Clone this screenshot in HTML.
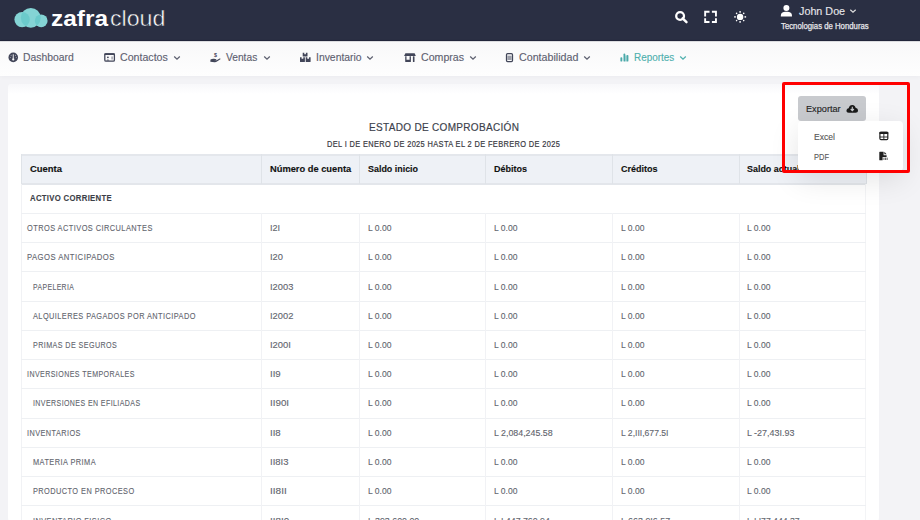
<!DOCTYPE html>
<html><head><meta charset="utf-8"><style>
html,body{margin:0;padding:0;}
body{width:920px;height:520px;overflow:hidden;position:relative;background:#f3f3f6;font-family:"Liberation Sans",sans-serif;}
.t{position:absolute;white-space:nowrap;line-height:1;transform-origin:0 0;-webkit-text-stroke:0.12px currentColor;}
svg{overflow:visible}
</style></head><body>
<div style="position:absolute;left:0;top:0;width:920px;height:41px;background:#2a2f43;box-shadow:inset 0 -1px 0 #22263a"></div>
<svg style="position:absolute;left:0;top:0" width="60" height="40" viewBox="0 0 60 40">
<defs><clipPath id="cm"><circle cx="30.8" cy="17.8" r="9.9"/></clipPath></defs>
<g fill="#84d4d5">
<circle cx="22.1" cy="19.6" r="7.7"/>
<circle cx="30.8" cy="17.8" r="9.9"/>
<circle cx="41.2" cy="20.8" r="6.4"/>
</g>
<g fill="#6bcacb" clip-path="url(#cm)">
<circle cx="22.1" cy="19.6" r="7.7"/>
<circle cx="41.2" cy="20.8" r="6.4"/>
</g></svg>
<div class="t" style="left:50.80px;top:8px;font-size:22.08px;font-weight:bold;color:#fff;transform:scaleX(1.1050);-webkit-text-stroke:0;">zafra</div>
<div class="t" style="left:110.20px;top:7px;font-size:22.67px;font-weight:normal;color:#fff;transform:scaleX(1.0223);-webkit-text-stroke:0.5px #2a2f43;">cloud</div>
<svg style="position:absolute;left:670px;top:6px" width="90" height="24" viewBox="670 6 90 24">
<circle cx="680.1" cy="16" r="3.9" fill="none" stroke="#fff" stroke-width="2.3"/>
<line x1="682.6" y1="18.3" x2="686.5" y2="22.2" stroke="#fff" stroke-width="2.4" stroke-linecap="round"/>
<path d="M705.15 16.4 V11.75 H709.5 M711.9 11.75 H715.95 V16.4 M715.95 18.3 V22.05 H711.9 M709.5 22.05 H705.15 V18.3" fill="none" stroke="#fff" stroke-width="1.9"/>
<circle cx="740.1" cy="16.9" r="3.2" fill="#fff"/>
<g fill="#fff"><rect x="739.35" y="11.1" width="1.5" height="1.6"/><rect x="739.35" y="21.1" width="1.5" height="1.6"/><rect x="734.2" y="16.15" width="1.6" height="1.5"/><rect x="744.5" y="16.15" width="1.6" height="1.5"/>
<circle cx="736.6" cy="13.4" r="0.8"/><circle cx="743.7" cy="13.4" r="0.8"/><circle cx="736.6" cy="20.6" r="0.8"/><circle cx="743.7" cy="20.6" r="0.8"/></g>
</svg>
<svg style="position:absolute;left:778px;top:2px" width="18" height="18" viewBox="778 2 18 18">
<circle cx="786.4" cy="8" r="3" fill="#fff"/>
<path d="M780.8 16.5 C780.8 12.6 782.5 11.8 786.4 11.8 C790.3 11.8 792 12.6 792 16.5 Z" fill="#fff"/>
</svg>
<div class="t" style="left:799.30px;top:6px;font-size:11.05px;font-weight:normal;color:#e6e6ea;transform:scaleX(0.9751);">John Doe</div>
<svg style="position:absolute;left:848px;top:8px" width="10" height="6" viewBox="0 0 10 6"><path d="M2.3 1.8 L5 4.3 L7.7 1.8" fill="none" stroke="#ddd" stroke-width="1.2"/></svg>
<div class="t" style="left:781.40px;top:23px;font-size:8.28px;font-weight:normal;color:#e6e6ea;transform:scaleX(0.9402);-webkit-text-stroke:0.25px #e6e6ea;">Tecnologias de Honduras</div>
<div style="position:absolute;left:0;top:41px;width:920px;height:34.5px;background:linear-gradient(#f8f8f9,#fefefe);box-shadow:0 1px 5px rgba(30,30,60,0.035)"></div>
<div style="position:absolute;left:0;top:41px;width:920px;height:1px;background:rgba(20,22,40,0.12)"></div>
<div class="t" style="left:23.20px;top:53px;font-size:10.03px;font-weight:normal;color:#5d6070;transform:scaleX(1.0358);">Dashboard</div>
<div class="t" style="left:120.20px;top:53px;font-size:10.03px;font-weight:normal;color:#5d6070;transform:scaleX(1.0602);">Contactos</div>
<svg style="position:absolute;left:173.2px;top:55px" width="8" height="6" viewBox="0 0 8 6"><path d="M1.2 1.6 L4 4.2 L6.8 1.6" fill="none" stroke="#5d6070" stroke-width="1.3"/></svg>
<div class="t" style="left:226.20px;top:53px;font-size:10.03px;font-weight:normal;color:#5d6070;transform:scaleX(1.0199);">Ventas</div>
<svg style="position:absolute;left:263.0px;top:55px" width="8" height="6" viewBox="0 0 8 6"><path d="M1.2 1.6 L4 4.2 L6.8 1.6" fill="none" stroke="#5d6070" stroke-width="1.3"/></svg>
<div class="t" style="left:316.00px;top:53px;font-size:10.03px;font-weight:normal;color:#5d6070;transform:scaleX(1.0380);">Inventario</div>
<svg style="position:absolute;left:366.0px;top:55px" width="8" height="6" viewBox="0 0 8 6"><path d="M1.2 1.6 L4 4.2 L6.8 1.6" fill="none" stroke="#5d6070" stroke-width="1.3"/></svg>
<div class="t" style="left:420.90px;top:53px;font-size:10.03px;font-weight:normal;color:#5d6070;transform:scaleX(1.0598);">Compras</div>
<svg style="position:absolute;left:468.9px;top:55px" width="8" height="6" viewBox="0 0 8 6"><path d="M1.2 1.6 L4 4.2 L6.8 1.6" fill="none" stroke="#5d6070" stroke-width="1.3"/></svg>
<div class="t" style="left:518.50px;top:53px;font-size:10.03px;font-weight:normal;color:#5d6070;transform:scaleX(1.0670);">Contabilidad</div>
<svg style="position:absolute;left:583.2px;top:55px" width="8" height="6" viewBox="0 0 8 6"><path d="M1.2 1.6 L4 4.2 L6.8 1.6" fill="none" stroke="#5d6070" stroke-width="1.3"/></svg>
<div class="t" style="left:634.00px;top:53px;font-size:10.03px;font-weight:normal;color:#4fb0ae;transform:scaleX(0.9897);">Reportes</div>
<svg style="position:absolute;left:679.3px;top:55px" width="8" height="6" viewBox="0 0 8 6"><path d="M1.2 1.6 L4 4.2 L6.8 1.6" fill="none" stroke="#4fb0ae" stroke-width="1.3"/></svg>
<svg style="position:absolute;left:0;top:40px" width="700" height="35" viewBox="0 40 700 35">
<circle cx="13.25" cy="57.4" r="4.8" fill="#424659"/>
<path d="M13.25 54.3 V58.8" stroke="#fdfdfd" stroke-width="0.9"/>
<circle cx="13.25" cy="59.4" r="1.1" fill="#fdfdfd"/>
<g fill="#fdfdfd"><circle cx="11.1" cy="55.3" r="0.45"/><circle cx="15.4" cy="55.3" r="0.45"/><circle cx="10.3" cy="57.6" r="0.45"/><circle cx="16.2" cy="57.6" r="0.45"/></g>
<rect x="104.8" y="53.9" width="9.6" height="7.2" rx="1.2" fill="none" stroke="#424659" stroke-width="1.3"/>
<rect x="104.3" y="53.3" width="10.6" height="1.8" rx="0.6" fill="#424659"/>
<circle cx="107.9" cy="57.3" r="0.9" fill="#424659"/>
<path d="M106.3 60.6 Q107.9 58.3 109.5 60.6 Z" fill="#424659"/>
<rect x="111.3" y="56.5" width="1.6" height="3" fill="#424659" fill-opacity="0.45"/>
<path d="M210.3 61.8 L210.5 59.6 Q212 58.5 214 58.7 L216.3 59.2 Q216.8 59.8 216 60 L213.8 59.9 L216.6 60.2 L219.6 58.6 Q220.8 58.3 220.4 59.2 L217 61.6 Q216 62.3 214.5 62.2 Z" fill="#424659"/>
<text x="214" y="56.8" font-size="5.4" font-family="Liberation Sans" font-weight="bold" fill="#424659">$</text>
<path d="M300 57.3 H301.6 V58.8 H303.3 V57.3 H304.9 V61.4 Q304.9 62 304.3 62 H300.6 Q300 62 300 61.4 Z" fill="#424659"/>
<path d="M305.7 57.3 H307.3 V58.8 H309 V57.3 H310.6 V61.4 Q310.6 62 310 62 H306.3 Q305.7 62 305.7 61.4 Z" fill="#424659"/>
<path d="M302.7 52.8 H304.3 V54.3 H305.9 V52.8 H307.5 V56 Q307.5 56.6 306.9 56.6 H303.3 Q302.7 56.6 302.7 56 Z" fill="#424659"/>
<path d="M405.4 53.2 H414.6 L415.8 56.1 H404.1 Z" fill="#424659"/>
<path d="M405.2 56.3 H410.9 V61.4 Q410.9 62 410.3 62 H405.8 Q405.2 62 405.2 61.4 Z M406.5 56.3 V59.8 H409.6 V56.3 Z" fill="#424659" fill-rule="evenodd"/>
<rect x="412.9" y="56.2" width="1.6" height="5.8" rx="0.5" fill="#424659"/>
<rect x="506.5" y="53.6" width="6" height="8" rx="1.1" fill="none" stroke="#424659" stroke-width="1.25"/>
<rect x="507.4" y="55.7" width="4.2" height="4.3" fill="#424659" fill-opacity="0.5"/>
<g fill="#4aa9a9"><rect x="620.4" y="57.2" width="1.9" height="4.4" rx="0.9"/><rect x="623.5" y="53.5" width="1.8" height="8.1" rx="0.9"/><rect x="626.5" y="54.9" width="1.9" height="6.7" rx="0.9"/>
<rect x="625.2" y="55.5" width="1.4" height="6" fill-opacity="0.45"/></g>
</svg>
<div style="position:absolute;left:8px;top:83.5px;width:871px;height:437px;background:linear-gradient(#f8f8fa,#fff 10px);border-radius:3px"></div>
<div class="t" style="left:368.60px;top:122px;font-size:11.34px;font-weight:normal;color:#3c3f4c;transform:scaleX(0.8853);-webkit-text-stroke:0.18px #3c3f4c;letter-spacing:0.03em;">ESTADO DE COMPROBACIÓN</div>
<div class="t" style="left:327.00px;top:139px;font-size:9.45px;font-weight:normal;color:#3a3a3f;transform:scaleX(0.7854);-webkit-text-stroke:0.22px #3a3a3f;letter-spacing:0.05em;">DEL I DE ENERO DE 2025 HASTA EL 2 DE FEBRERO DE 2025</div>
<div style="position:absolute;left:21px;top:154px;width:845px;height:30px;background:#eef1f6;"></div>
<div style="position:absolute;left:21px;top:154px;width:845px;height:2px;background:#e4e7ec"></div>
<div style="position:absolute;left:21px;top:183px;width:845px;height:2px;background:#e3e6eb"></div>
<div style="position:absolute;left:20.5px;top:154px;width:1px;height:30px;background:#dfe3e8"></div>
<div style="position:absolute;left:261.0px;top:154px;width:1px;height:30px;background:#dfe3e8"></div>
<div style="position:absolute;left:359.0px;top:154px;width:1px;height:30px;background:#dfe3e8"></div>
<div style="position:absolute;left:485.0px;top:154px;width:1px;height:30px;background:#dfe3e8"></div>
<div style="position:absolute;left:612.0px;top:154px;width:1px;height:30px;background:#dfe3e8"></div>
<div style="position:absolute;left:738.5px;top:154px;width:1px;height:30px;background:#dfe3e8"></div>
<div style="position:absolute;left:865.5px;top:154px;width:1px;height:30px;background:#dfe3e8"></div>
<div class="t" style="left:30.20px;top:165px;font-size:9.16px;font-weight:bold;color:#111;transform:scaleX(1.0310);">Cuenta</div>
<div class="t" style="left:269.80px;top:165px;font-size:9.16px;font-weight:bold;color:#111;transform:scaleX(1.0164);">Número de cuenta</div>
<div class="t" style="left:367.70px;top:165px;font-size:9.16px;font-weight:bold;color:#111;transform:scaleX(0.9733);">Saldo inicio</div>
<div class="t" style="left:494.10px;top:165px;font-size:9.16px;font-weight:bold;color:#111;transform:scaleX(0.9803);">Débitos</div>
<div class="t" style="left:620.80px;top:165px;font-size:9.16px;font-weight:bold;color:#111;transform:scaleX(0.9857);">Créditos</div>
<div class="t" style="left:747.40px;top:165px;font-size:9.16px;font-weight:bold;color:#111;transform:scaleX(0.9753);">Saldo actual</div>
<div style="position:absolute;left:21px;top:184px;width:1px;height:336px;background:#f1f2f5"></div>
<div style="position:absolute;left:865px;top:184px;width:1px;height:336px;background:#f3f4f6"></div>
<div class="t" style="left:30.20px;top:193px;font-size:9.45px;font-weight:bold;color:#3d3f48;transform:scaleX(0.8211);letter-spacing:0.04em;">ACTIVO CORRIENTE</div>
<div style="position:absolute;left:21px;top:212.75px;width:845px;height:1px;background:#eef0f3"></div>
<div style="position:absolute;left:21px;top:242.00px;width:845px;height:1px;background:#eef0f3"></div>
<div style="position:absolute;left:21px;top:271.25px;width:845px;height:1px;background:#eef0f3"></div>
<div style="position:absolute;left:21px;top:300.50px;width:845px;height:1px;background:#eef0f3"></div>
<div style="position:absolute;left:21px;top:329.75px;width:845px;height:1px;background:#eef0f3"></div>
<div style="position:absolute;left:21px;top:359.00px;width:845px;height:1px;background:#eef0f3"></div>
<div style="position:absolute;left:21px;top:388.25px;width:845px;height:1px;background:#eef0f3"></div>
<div style="position:absolute;left:21px;top:417.50px;width:845px;height:1px;background:#eef0f3"></div>
<div style="position:absolute;left:21px;top:446.75px;width:845px;height:1px;background:#eef0f3"></div>
<div style="position:absolute;left:21px;top:476.00px;width:845px;height:1px;background:#eef0f3"></div>
<div style="position:absolute;left:21px;top:505.25px;width:845px;height:1px;background:#eef0f3"></div>
<div style="position:absolute;left:21px;top:534.50px;width:845px;height:1px;background:#eef0f3"></div>
<div style="position:absolute;left:261.0px;top:213.25px;width:1px;height:29.25px;background:#f1f2f5"></div>
<div style="position:absolute;left:359.0px;top:213.25px;width:1px;height:29.25px;background:#f1f2f5"></div>
<div style="position:absolute;left:485.0px;top:213.25px;width:1px;height:29.25px;background:#f1f2f5"></div>
<div style="position:absolute;left:612.0px;top:213.25px;width:1px;height:29.25px;background:#f1f2f5"></div>
<div style="position:absolute;left:738.5px;top:213.25px;width:1px;height:29.25px;background:#f1f2f5"></div>
<div class="t" style="left:26.50px;top:223px;font-size:9.45px;font-weight:normal;color:#62656e;transform:scaleX(0.7839);letter-spacing:0.06em;">OTROS ACTIVOS CIRCULANTES</div>
<div class="t" style="left:269.80px;top:223px;font-size:9.45px;font-weight:normal;color:#62656e;transform:scaleX(0.9631);">I2I</div>
<div class="t" style="left:367.70px;top:223px;font-size:9.45px;font-weight:normal;color:#62656e;transform:scaleX(0.9062);">L 0.00</div>
<div class="t" style="left:494.10px;top:223px;font-size:9.45px;font-weight:normal;color:#62656e;transform:scaleX(0.9062);">L 0.00</div>
<div class="t" style="left:620.80px;top:223px;font-size:9.45px;font-weight:normal;color:#62656e;transform:scaleX(0.9062);">L 0.00</div>
<div class="t" style="left:747.40px;top:223px;font-size:9.45px;font-weight:normal;color:#62656e;transform:scaleX(0.9062);">L 0.00</div>
<div style="position:absolute;left:261.0px;top:242.50px;width:1px;height:29.25px;background:#f1f2f5"></div>
<div style="position:absolute;left:359.0px;top:242.50px;width:1px;height:29.25px;background:#f1f2f5"></div>
<div style="position:absolute;left:485.0px;top:242.50px;width:1px;height:29.25px;background:#f1f2f5"></div>
<div style="position:absolute;left:612.0px;top:242.50px;width:1px;height:29.25px;background:#f1f2f5"></div>
<div style="position:absolute;left:738.5px;top:242.50px;width:1px;height:29.25px;background:#f1f2f5"></div>
<div class="t" style="left:26.50px;top:252px;font-size:9.45px;font-weight:normal;color:#62656e;transform:scaleX(0.8146);letter-spacing:0.06em;">PAGOS ANTICIPADOS</div>
<div class="t" style="left:269.80px;top:252px;font-size:9.45px;font-weight:normal;color:#62656e;transform:scaleX(0.9899);">I20</div>
<div class="t" style="left:367.70px;top:252px;font-size:9.45px;font-weight:normal;color:#62656e;transform:scaleX(0.9062);">L 0.00</div>
<div class="t" style="left:494.10px;top:252px;font-size:9.45px;font-weight:normal;color:#62656e;transform:scaleX(0.9062);">L 0.00</div>
<div class="t" style="left:620.80px;top:252px;font-size:9.45px;font-weight:normal;color:#62656e;transform:scaleX(0.9062);">L 0.00</div>
<div class="t" style="left:747.40px;top:252px;font-size:9.45px;font-weight:normal;color:#62656e;transform:scaleX(0.9062);">L 0.00</div>
<div style="position:absolute;left:261.0px;top:271.75px;width:1px;height:29.25px;background:#f1f2f5"></div>
<div style="position:absolute;left:359.0px;top:271.75px;width:1px;height:29.25px;background:#f1f2f5"></div>
<div style="position:absolute;left:485.0px;top:271.75px;width:1px;height:29.25px;background:#f1f2f5"></div>
<div style="position:absolute;left:612.0px;top:271.75px;width:1px;height:29.25px;background:#f1f2f5"></div>
<div style="position:absolute;left:738.5px;top:271.75px;width:1px;height:29.25px;background:#f1f2f5"></div>
<div class="t" style="left:32.80px;top:282px;font-size:9.45px;font-weight:normal;color:#62656e;transform:scaleX(0.7258);letter-spacing:0.06em;">PAPELERIA</div>
<div class="t" style="left:269.80px;top:282px;font-size:9.45px;font-weight:normal;color:#62656e;transform:scaleX(0.9887);">I2003</div>
<div class="t" style="left:367.70px;top:282px;font-size:9.45px;font-weight:normal;color:#62656e;transform:scaleX(0.9062);">L 0.00</div>
<div class="t" style="left:494.10px;top:282px;font-size:9.45px;font-weight:normal;color:#62656e;transform:scaleX(0.9062);">L 0.00</div>
<div class="t" style="left:620.80px;top:282px;font-size:9.45px;font-weight:normal;color:#62656e;transform:scaleX(0.9062);">L 0.00</div>
<div class="t" style="left:747.40px;top:282px;font-size:9.45px;font-weight:normal;color:#62656e;transform:scaleX(0.9062);">L 0.00</div>
<div style="position:absolute;left:261.0px;top:301.00px;width:1px;height:29.25px;background:#f1f2f5"></div>
<div style="position:absolute;left:359.0px;top:301.00px;width:1px;height:29.25px;background:#f1f2f5"></div>
<div style="position:absolute;left:485.0px;top:301.00px;width:1px;height:29.25px;background:#f1f2f5"></div>
<div style="position:absolute;left:612.0px;top:301.00px;width:1px;height:29.25px;background:#f1f2f5"></div>
<div style="position:absolute;left:738.5px;top:301.00px;width:1px;height:29.25px;background:#f1f2f5"></div>
<div class="t" style="left:32.80px;top:311px;font-size:9.45px;font-weight:normal;color:#62656e;transform:scaleX(0.7803);letter-spacing:0.06em;">ALQUILERES PAGADOS POR ANTICIPADO</div>
<div class="t" style="left:269.80px;top:311px;font-size:9.45px;font-weight:normal;color:#62656e;transform:scaleX(0.9887);">I2002</div>
<div class="t" style="left:367.70px;top:311px;font-size:9.45px;font-weight:normal;color:#62656e;transform:scaleX(0.9062);">L 0.00</div>
<div class="t" style="left:494.10px;top:311px;font-size:9.45px;font-weight:normal;color:#62656e;transform:scaleX(0.9062);">L 0.00</div>
<div class="t" style="left:620.80px;top:311px;font-size:9.45px;font-weight:normal;color:#62656e;transform:scaleX(0.9062);">L 0.00</div>
<div class="t" style="left:747.40px;top:311px;font-size:9.45px;font-weight:normal;color:#62656e;transform:scaleX(0.9062);">L 0.00</div>
<div style="position:absolute;left:261.0px;top:330.25px;width:1px;height:29.25px;background:#f1f2f5"></div>
<div style="position:absolute;left:359.0px;top:330.25px;width:1px;height:29.25px;background:#f1f2f5"></div>
<div style="position:absolute;left:485.0px;top:330.25px;width:1px;height:29.25px;background:#f1f2f5"></div>
<div style="position:absolute;left:612.0px;top:330.25px;width:1px;height:29.25px;background:#f1f2f5"></div>
<div style="position:absolute;left:738.5px;top:330.25px;width:1px;height:29.25px;background:#f1f2f5"></div>
<div class="t" style="left:32.80px;top:340px;font-size:9.45px;font-weight:normal;color:#62656e;transform:scaleX(0.7564);letter-spacing:0.06em;">PRIMAS DE SEGUROS</div>
<div class="t" style="left:269.80px;top:340px;font-size:9.45px;font-weight:normal;color:#62656e;transform:scaleX(0.9990);">I200I</div>
<div class="t" style="left:367.70px;top:340px;font-size:9.45px;font-weight:normal;color:#62656e;transform:scaleX(0.9062);">L 0.00</div>
<div class="t" style="left:494.10px;top:340px;font-size:9.45px;font-weight:normal;color:#62656e;transform:scaleX(0.9062);">L 0.00</div>
<div class="t" style="left:620.80px;top:340px;font-size:9.45px;font-weight:normal;color:#62656e;transform:scaleX(0.9062);">L 0.00</div>
<div class="t" style="left:747.40px;top:340px;font-size:9.45px;font-weight:normal;color:#62656e;transform:scaleX(0.9062);">L 0.00</div>
<div style="position:absolute;left:261.0px;top:359.50px;width:1px;height:29.25px;background:#f1f2f5"></div>
<div style="position:absolute;left:359.0px;top:359.50px;width:1px;height:29.25px;background:#f1f2f5"></div>
<div style="position:absolute;left:485.0px;top:359.50px;width:1px;height:29.25px;background:#f1f2f5"></div>
<div style="position:absolute;left:612.0px;top:359.50px;width:1px;height:29.25px;background:#f1f2f5"></div>
<div style="position:absolute;left:738.5px;top:359.50px;width:1px;height:29.25px;background:#f1f2f5"></div>
<div class="t" style="left:26.50px;top:369px;font-size:9.45px;font-weight:normal;color:#62656e;transform:scaleX(0.7491);letter-spacing:0.06em;">INVERSIONES TEMPORALES</div>
<div class="t" style="left:269.80px;top:369px;font-size:9.45px;font-weight:normal;color:#62656e;transform:scaleX(1.0203);">II9</div>
<div class="t" style="left:367.70px;top:369px;font-size:9.45px;font-weight:normal;color:#62656e;transform:scaleX(0.9062);">L 0.00</div>
<div class="t" style="left:494.10px;top:369px;font-size:9.45px;font-weight:normal;color:#62656e;transform:scaleX(0.9062);">L 0.00</div>
<div class="t" style="left:620.80px;top:369px;font-size:9.45px;font-weight:normal;color:#62656e;transform:scaleX(0.9062);">L 0.00</div>
<div class="t" style="left:747.40px;top:369px;font-size:9.45px;font-weight:normal;color:#62656e;transform:scaleX(0.9062);">L 0.00</div>
<div style="position:absolute;left:261.0px;top:388.75px;width:1px;height:29.25px;background:#f1f2f5"></div>
<div style="position:absolute;left:359.0px;top:388.75px;width:1px;height:29.25px;background:#f1f2f5"></div>
<div style="position:absolute;left:485.0px;top:388.75px;width:1px;height:29.25px;background:#f1f2f5"></div>
<div style="position:absolute;left:612.0px;top:388.75px;width:1px;height:29.25px;background:#f1f2f5"></div>
<div style="position:absolute;left:738.5px;top:388.75px;width:1px;height:29.25px;background:#f1f2f5"></div>
<div class="t" style="left:32.80px;top:398px;font-size:9.45px;font-weight:normal;color:#62656e;transform:scaleX(0.7428);letter-spacing:0.06em;">INVERSIONES EN EFILIADAS</div>
<div class="t" style="left:269.80px;top:398px;font-size:9.45px;font-weight:normal;color:#62656e;transform:scaleX(1.0394);">II90I</div>
<div class="t" style="left:367.70px;top:398px;font-size:9.45px;font-weight:normal;color:#62656e;transform:scaleX(0.9062);">L 0.00</div>
<div class="t" style="left:494.10px;top:398px;font-size:9.45px;font-weight:normal;color:#62656e;transform:scaleX(0.9062);">L 0.00</div>
<div class="t" style="left:620.80px;top:398px;font-size:9.45px;font-weight:normal;color:#62656e;transform:scaleX(0.9062);">L 0.00</div>
<div class="t" style="left:747.40px;top:398px;font-size:9.45px;font-weight:normal;color:#62656e;transform:scaleX(0.9062);">L 0.00</div>
<div style="position:absolute;left:261.0px;top:418.00px;width:1px;height:29.25px;background:#f1f2f5"></div>
<div style="position:absolute;left:359.0px;top:418.00px;width:1px;height:29.25px;background:#f1f2f5"></div>
<div style="position:absolute;left:485.0px;top:418.00px;width:1px;height:29.25px;background:#f1f2f5"></div>
<div style="position:absolute;left:612.0px;top:418.00px;width:1px;height:29.25px;background:#f1f2f5"></div>
<div style="position:absolute;left:738.5px;top:418.00px;width:1px;height:29.25px;background:#f1f2f5"></div>
<div class="t" style="left:26.50px;top:428px;font-size:9.45px;font-weight:normal;color:#62656e;transform:scaleX(0.7752);letter-spacing:0.06em;">INVENTARIOS</div>
<div class="t" style="left:269.80px;top:428px;font-size:9.45px;font-weight:normal;color:#62656e;transform:scaleX(1.0203);">II8</div>
<div class="t" style="left:367.70px;top:428px;font-size:9.45px;font-weight:normal;color:#62656e;transform:scaleX(0.9062);">L 0.00</div>
<div class="t" style="left:494.10px;top:428px;font-size:9.45px;font-weight:normal;color:#62656e;transform:scaleX(0.9364);">L 2,084,245.58</div>
<div class="t" style="left:620.80px;top:428px;font-size:9.45px;font-weight:normal;color:#62656e;transform:scaleX(0.9108);">L 2,III,677.5I</div>
<div class="t" style="left:747.40px;top:428px;font-size:9.45px;font-weight:normal;color:#62656e;transform:scaleX(0.9466);">L -27,43I.93</div>
<div style="position:absolute;left:261.0px;top:447.25px;width:1px;height:29.25px;background:#f1f2f5"></div>
<div style="position:absolute;left:359.0px;top:447.25px;width:1px;height:29.25px;background:#f1f2f5"></div>
<div style="position:absolute;left:485.0px;top:447.25px;width:1px;height:29.25px;background:#f1f2f5"></div>
<div style="position:absolute;left:612.0px;top:447.25px;width:1px;height:29.25px;background:#f1f2f5"></div>
<div style="position:absolute;left:738.5px;top:447.25px;width:1px;height:29.25px;background:#f1f2f5"></div>
<div class="t" style="left:32.80px;top:457px;font-size:9.45px;font-weight:normal;color:#62656e;transform:scaleX(0.7822);letter-spacing:0.06em;">MATERIA PRIMA</div>
<div class="t" style="left:269.80px;top:457px;font-size:9.45px;font-weight:normal;color:#62656e;transform:scaleX(1.0068);">II8I3</div>
<div class="t" style="left:367.70px;top:457px;font-size:9.45px;font-weight:normal;color:#62656e;transform:scaleX(0.9062);">L 0.00</div>
<div class="t" style="left:494.10px;top:457px;font-size:9.45px;font-weight:normal;color:#62656e;transform:scaleX(0.9062);">L 0.00</div>
<div class="t" style="left:620.80px;top:457px;font-size:9.45px;font-weight:normal;color:#62656e;transform:scaleX(0.9062);">L 0.00</div>
<div class="t" style="left:747.40px;top:457px;font-size:9.45px;font-weight:normal;color:#62656e;transform:scaleX(0.9062);">L 0.00</div>
<div style="position:absolute;left:261.0px;top:476.50px;width:1px;height:29.25px;background:#f1f2f5"></div>
<div style="position:absolute;left:359.0px;top:476.50px;width:1px;height:29.25px;background:#f1f2f5"></div>
<div style="position:absolute;left:485.0px;top:476.50px;width:1px;height:29.25px;background:#f1f2f5"></div>
<div style="position:absolute;left:612.0px;top:476.50px;width:1px;height:29.25px;background:#f1f2f5"></div>
<div style="position:absolute;left:738.5px;top:476.50px;width:1px;height:29.25px;background:#f1f2f5"></div>
<div class="t" style="left:32.80px;top:486px;font-size:9.45px;font-weight:normal;color:#62656e;transform:scaleX(0.7802);letter-spacing:0.06em;">PRODUCTO EN PROCESO</div>
<div class="t" style="left:269.80px;top:486px;font-size:9.45px;font-weight:normal;color:#62656e;transform:scaleX(1.0616);">II8II</div>
<div class="t" style="left:367.70px;top:486px;font-size:9.45px;font-weight:normal;color:#62656e;transform:scaleX(0.9062);">L 0.00</div>
<div class="t" style="left:494.10px;top:486px;font-size:9.45px;font-weight:normal;color:#62656e;transform:scaleX(0.9062);">L 0.00</div>
<div class="t" style="left:620.80px;top:486px;font-size:9.45px;font-weight:normal;color:#62656e;transform:scaleX(0.9062);">L 0.00</div>
<div class="t" style="left:747.40px;top:486px;font-size:9.45px;font-weight:normal;color:#62656e;transform:scaleX(0.9062);">L 0.00</div>
<div style="position:absolute;left:261.0px;top:505.75px;width:1px;height:29.25px;background:#f1f2f5"></div>
<div style="position:absolute;left:359.0px;top:505.75px;width:1px;height:29.25px;background:#f1f2f5"></div>
<div style="position:absolute;left:485.0px;top:505.75px;width:1px;height:29.25px;background:#f1f2f5"></div>
<div style="position:absolute;left:612.0px;top:505.75px;width:1px;height:29.25px;background:#f1f2f5"></div>
<div style="position:absolute;left:738.5px;top:505.75px;width:1px;height:29.25px;background:#f1f2f5"></div>
<div class="t" style="left:32.80px;top:516px;font-size:9.45px;font-weight:normal;color:#62656e;transform:scaleX(0.7801);letter-spacing:0.06em;">INVENTARIO FISICO</div>
<div class="t" style="left:269.80px;top:516px;font-size:9.45px;font-weight:normal;color:#62656e;transform:scaleX(1.0394);">II8I0</div>
<div class="t" style="left:367.70px;top:516px;font-size:9.45px;font-weight:normal;color:#62656e;transform:scaleX(0.9362);">L 393,600.00</div>
<div class="t" style="left:494.10px;top:516px;font-size:9.45px;font-weight:normal;color:#62656e;transform:scaleX(0.9303);">L I,447,760.94</div>
<div class="t" style="left:620.80px;top:516px;font-size:9.45px;font-weight:normal;color:#62656e;transform:scaleX(0.9426);">L 663,9I6.57</div>
<div class="t" style="left:747.40px;top:516px;font-size:9.45px;font-weight:normal;color:#62656e;transform:scaleX(0.9157);">L I,I77,444.37</div>
<div style="position:absolute;left:797.9px;top:96.3px;width:68.2px;height:24.4px;background:#c8cace;border-radius:3px"></div>
<div class="t" style="left:806.20px;top:104px;font-size:9.59px;font-weight:normal;color:#222;transform:scaleX(0.9569);">Exportar</div>
<svg style="position:absolute;left:845px;top:102px" width="14" height="12" viewBox="845 102 14 12">
<path d="M849 112.8 C846.5 112.8 846 110.8 846.8 109.4 C847.3 108.6 848 108.3 848.7 108.3 C849 106 850.6 104.9 852.3 104.9 C854.3 104.9 855.5 106.4 855.7 108 C857.2 108.2 858 109.3 858 110.5 C858 111.8 857 112.8 855.6 112.8 Z" fill="#1a1a1a"/>
<path d="M852.3 106.8 V110.4 M850.7 109 L852.3 110.7 L853.9 109" stroke="#c8cace" stroke-width="1.1" fill="none"/>
</svg>
<div style="position:absolute;left:797.9px;top:121px;width:105.5px;height:50px;background:#fff;border-radius:4px;box-shadow:0 8px 30px rgba(0,0,0,0.11)"></div>
<div class="t" style="left:813.60px;top:132px;font-size:9.88px;font-weight:normal;color:#555;transform:scaleX(0.8690);">Excel</div>
<div class="t" style="left:813.60px;top:152px;font-size:9.59px;font-weight:normal;color:#555;transform:scaleX(0.7818);">PDF</div>
<svg style="position:absolute;left:876px;top:129px" width="15" height="35" viewBox="876 129 15 35">
<rect x="879.9" y="132.4" width="7.9" height="7.2" rx="1.1" fill="none" stroke="#1e1e1e" stroke-width="1.2"/>
<rect x="879.3" y="131.8" width="9.1" height="2.1" rx="0.9" fill="#1e1e1e"/>
<line x1="883.85" y1="133" x2="883.85" y2="139.8" stroke="#1e1e1e" stroke-width="0.9"/>
<line x1="879.8" y1="137.0" x2="887.9" y2="137.0" stroke="#1e1e1e" stroke-width="0.9"/>
<path d="M879.3 152.3 Q879.3 151.8 879.8 151.8 H883.6 V155.2 H886.6 V156.9 H882.6 V160.2 H879.8 Q879.3 160.2 879.3 159.7 Z" fill="#1e1e1e"/>
<path d="M884.4 151.8 L886.6 154.3 H884.4 Z" fill="#1e1e1e"/>
<g fill="#333" fill-opacity="0.75"><rect x="883.4" y="157.6" width="1.1" height="2.4"/><rect x="885" y="157.6" width="1.1" height="2.4"/><rect x="886.6" y="157.6" width="1.1" height="2.4"/></g>
</svg>
<div style="position:absolute;left:782px;top:82px;width:122px;height:85px;border:3px solid #f00;border-radius:2px;box-sizing:content-box"></div>
</body></html>
